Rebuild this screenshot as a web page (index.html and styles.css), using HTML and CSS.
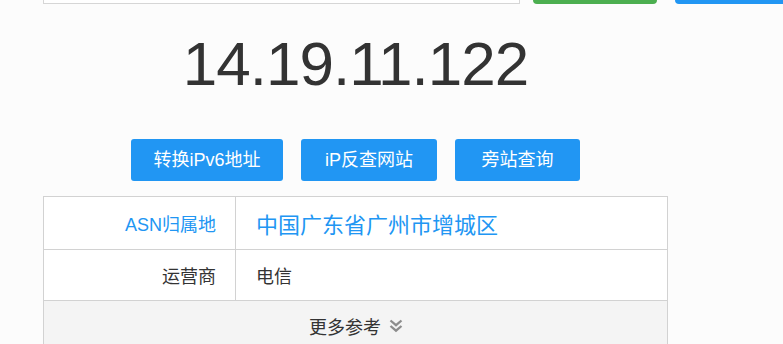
FILE: index.html
```html
<!DOCTYPE html>
<html lang="zh-CN">
<head>
<meta charset="utf-8">
<title>IP查询</title>
<link rel="stylesheet" href="styles.css">
</head>
<body>
<div class="page">
  <div class="search">
    <div class="search-input"></div>
    <button class="top-btn top-btn-green"></button>
    <button class="top-btn top-btn-blue"></button>
  </div>
  <h1 class="ip">14.19.11.122</h1>
  <div class="actions">
    <a class="action action-v6">转换iPv6地址</a>
    <a class="action action-rev">iP反查网站</a>
    <a class="action action-side">旁站查询</a>
  </div>
  <table class="info">
    <tr class="row-asn">
      <th>ASN归属地</th>
      <td>中国广东省广州市增城区</td>
    </tr>
    <tr class="row-isp">
      <th>运营商</th>
      <td>电信</td>
    </tr>
    <tr class="row-more">
      <td colspan="2"><span class="more"><span>更多参考</span><svg class="chev" width="14" height="14" viewBox="0 0 14 14"><path d="M1.5 1.5 L7 6.2 L12.5 1.5 M1.5 7 L7 11.7 L12.5 7" fill="none" stroke="#8c8c8c" stroke-width="2.3"/></svg></span></td>
    </tr>
  </table>
</div>
</body>
</html>
```

FILE: styles.css
```css
html, body {
  margin: 0;
  padding: 0;
  background: #fcfcfc;
  font-family: "Liberation Sans", "Noto Sans CJK SC", sans-serif;
  color: #333;
  overflow: hidden;
}
.page {
  margin-left: 43px;
  width: 625px;
}
.search {
  display: flex;
  height: 40px;
  margin-top: -36px;
  width: 740px;
}
.search-input {
  box-sizing: border-box;
  width: 477px;
  height: 40px;
  border: 1px solid #d6d6d6;
  background: #fff;
}
.top-btn {
  border: 0;
  height: 40px;
  border-radius: 4px;
  padding: 0;
}
.top-btn-green {
  margin-left: 13px;
  width: 124px;
  background: #4caf50;
}
.top-btn-blue {
  margin-left: 18px;
  width: 108px;
  border-radius: 4px 0 0 4px;
  background: #2196f3;
}
.ip {
  margin: 29px 0 0;
  font-size: 62px;
  line-height: 62px;
  font-weight: normal;
  letter-spacing: -1px;
  text-align: center;
  color: #333;
}
.actions {
  display: flex;
  justify-content: center;
  gap: 18px;
  margin-top: 44px;
}
.action {
  display: block;
  height: 42px;
  line-height: 42px;
  text-align: center;
  background: #2196f3;
  color: #fff;
  font-size: 18px;
  border-radius: 3px;
}
.action-v6 { width: 152px; }
.action-rev { width: 136px; }
.action-side { width: 125px; }
.info {
  margin-top: 15px;
  width: 625px;
  border-collapse: collapse;
  background: #fff;
}
.info th, .info td {
  border: 1px solid #d2d2d2;
  padding: 0 19px 0 20px;
}
.info th {
  width: 152px;
  text-align: right;
  font-weight: normal;
  font-size: 18px;
}
.row-asn th, .row-asn td { height: 52px; }
.row-asn th { color: #2196f3; }
.row-asn td { color: #2196f3; font-size: 22px; }
.row-isp th, .row-isp td { height: 50px; font-size: 18px; color: #333; }
.row-more td {
  background: #f4f4f4;
  height: 50px;
  text-align: center;
  font-size: 18px;
  color: #333;
}
.more {
  display: inline-flex;
  align-items: center;
  gap: 8px;
}
.chev { display: block; }
```
